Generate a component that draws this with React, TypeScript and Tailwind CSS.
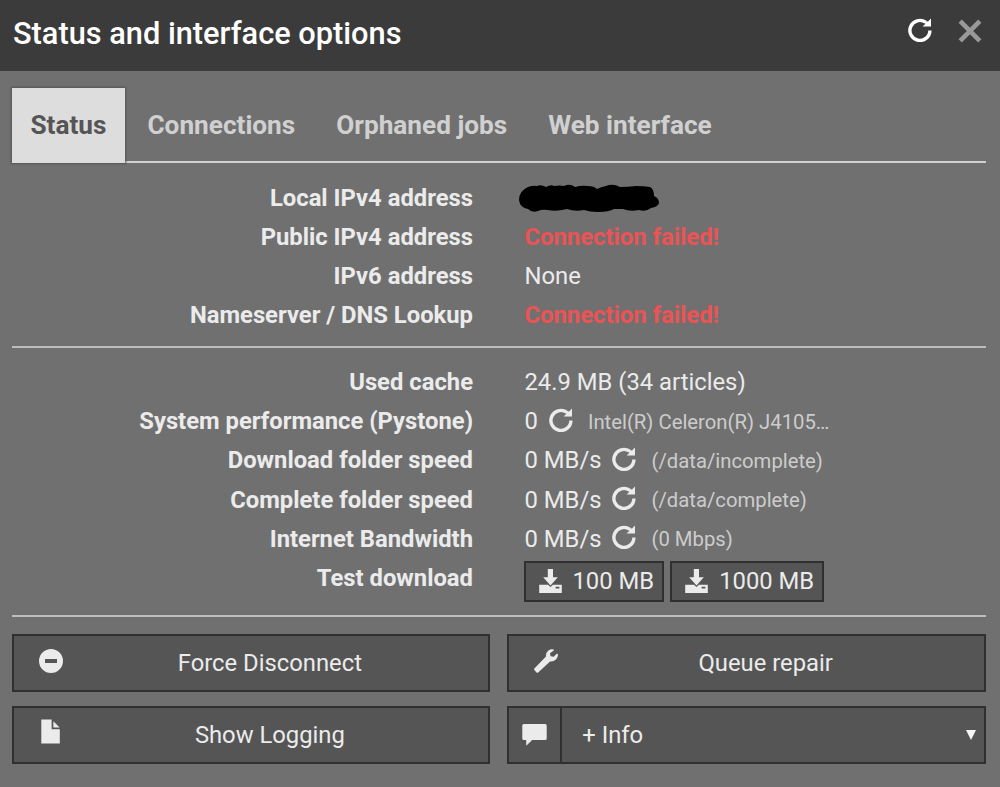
import { useState } from "react";
import type { ReactNode } from "react";

interface RowProps {
  label: string;
  children: ReactNode;
}

const tabs = ["Status", "Connections", "Orphaned jobs", "Web interface"];

const RefreshIcon = () => (
  <svg viewBox="0 0 24 24" className="h-6 w-6 shrink-0" fill="none">
    <path d="M21.9 12.4A10 10 0 1 1 17.6 4.2" stroke="currentColor" strokeWidth="3.4" />
    <path d="M23 0.6V8.6H14.6L17.2 6L16.4 2.8L20 3.6Z" fill="currentColor" />
  </svg>
);

const CloseIcon = () => (
  <svg viewBox="0 0 24 24" className="h-6 w-6">
    <path d="M2.2 2.2L21.8 21.8M21.8 2.2L2.2 21.8" stroke="currentColor" strokeWidth="4.6" />
  </svg>
);

const SaveIcon = () => (
  <svg viewBox="0 0 23 24" className="h-6 w-[23px] shrink-0" fill="currentColor">
    <path d="M8.8 0H14V8.3H18.8L11.5 16.6L4.2 8.3H8.8Z" />
    <path
      fillRule="evenodd"
      d="M0.2 15.8H9L11.5 18L14 15.8H22.8V24H0.2ZM16.6 17.8V19.6H20.4V17.8Z"
    />
  </svg>
);

const MinusIcon = () => (
  <svg viewBox="0 0 24 24" className="h-6 w-6" fill="currentColor">
    <path fillRule="evenodd" d="M12 0A12 12 0 1 1 12 24A12 12 0 1 1 12 0ZM6 10V14H18V10Z" />
  </svg>
);

const FileIcon = () => (
  <svg viewBox="0 0 19 25" className="-mt-1 h-[25px] w-[19px]" fill="currentColor">
    <path d="M0.3 0.4H10.6V10.2H18.8V24.6H0.3Z" />
    <path d="M12.4 2.2L18.6 8.4H12.4Z" />
  </svg>
);

const WrenchIcon = () => (
  <svg viewBox="0 0 24 24" className="h-6 w-6" fill="currentColor">
    <path d="M19.8 0.6Q17 -0.4 14.4 1.4Q11.6 3.6 12 7.6L0.4 19.6Q-0.2 20.4 0.5 21.2L2.6 23.5Q3.4 24.2 4.2 23.4L16 12.4Q19.4 12.8 22 10.4Q24.4 8 23.8 5L22.8 4.8L19.6 7.8L16.6 7.2L16 4.2L19.8 1.6Z" />
  </svg>
);

const CommentIcon = () => (
  <svg viewBox="0 0 25 22" className="h-[22px] w-[25px]" fill="currentColor">
    <path d="M1.8 0H23.2Q24.7 0 24.7 1.5V14.4Q24.7 16 23.2 16H10.2L4.2 21.8V16H1.8Q0.3 16 0.3 14.4V1.5Q0.3 0 1.8 0Z" />
  </svg>
);

// Scribble that hides the local address
const Redacted = () => (
  <svg viewBox="0 0 142 30" className="-ml-[7px] mt-0.5 h-[30px] w-[142px]">
    <path d="M10 3Q15 1 19 2Q23 0 28 3Q33 0 36 2Q42 1 46 2Q52 -1 57 3Q63 1 70 2Q76 2 79 5Q83 3 88 2Q95 -1 102 3Q110 3 118 2Q126 2 132 3Q136 5 136 12Q141 14 141 19Q140 23 133 24Q128 28 121 26Q112 28 105 25L96 25Q91 28 80 28Q72 28 66 26Q57 28 49 25Q38 28 30 26Q24 25 20 27Q14 29 10 25Q2 24 1 16Q1 7 10 3Z" />
  </svg>
);

const Row = ({ label, children }: RowProps) => (
  <div className="flex h-[39.2px] items-center">
    <div className="w-[461.5px] shrink-0 text-right font-bold">{label}</div>
    <div className="ml-[51.5px] flex items-center whitespace-nowrap">{children}</div>
  </div>
);

const Speed = ({ value, note }: { value: string; note: string }) => (
  <>
    <span>{value}</span>
    <button className="-mt-[3px] ml-[11px]">
      <RefreshIcon />
    </button>
    <span className="ml-[15px] pt-px text-[20.3px] text-[#cccccc]">{note}</span>
  </>
);

const Failed = () => <span className="font-bold text-[#ec5355]">Connection failed!</span>;

const TestButton = ({ label }: { label: string }) => (
  <button className="flex h-[41px] items-center gap-[11px] border-2 border-[#303030] bg-[#555555] pr-[8px] pl-[13px]">
    <SaveIcon />
    {label}
  </button>
);

const ActionButton = ({ icon, label }: { icon: ReactNode; label: string }) => (
  <button className="flex h-[58px] items-center border-2 border-[#303030] bg-[#555555]">
    <span className="-mt-1 flex w-[74px] shrink-0 justify-center">{icon}</span>
    <span className="flex-1 pr-9 text-center">{label}</span>
  </button>
);

export default function App() {
  const [active, setActive] = useState("Status");

  return (
    <div className="h-[787px] w-[1000px] overflow-hidden bg-[#707070] font-[Roboto,sans-serif] text-[23.8px] leading-8 text-[#ebebeb]">
      <header className="flex h-[71px] items-center justify-between bg-[#3b3b3b] pr-[18px] pb-[5px] pl-[13px]">
        <h1 className="pt-px text-[30.75px] font-medium text-white">Status and interface options</h1>
        <div className="flex items-center gap-[26px] pb-1">
          <button className="-mt-0.5 text-white">
            <RefreshIcon />
          </button>
          <button className="text-[#999999]">
            <CloseIcon />
          </button>
        </div>
      </header>

      <main className="pr-[14px] pl-[11.5px]">
        <nav className="mt-[17px] flex h-[75px] border-b-2 border-[#d0d0d0] text-[26.2px] font-bold">
          {tabs.map((tab) => (
            <button
              key={tab}
              onClick={() => setActive(tab)}
              className={
                tab === active
                  ? "-mb-0.5 mr-[3px] bg-[#dddddd] px-[19px] pb-0.5 text-[#555555] shadow-[0_0_2px_1px_#555555]"
                  : "mr-[3px] px-[19px] text-[#d0d0d0]"
              }
            >
              {tab}
            </button>
          ))}
        </nav>

        <section className="h-[185px] border-b-2 border-[#bdbdbd] pt-[15px]">
          <Row label="Local IPv4 address">
            <Redacted />
          </Row>
          <Row label="Public IPv4 address">
            <Failed />
          </Row>
          <Row label="IPv6 address">None</Row>
          <Row label="Nameserver / DNS Lookup">
            <Failed />
          </Row>
        </section>

        <section className="h-[269px] border-b-2 border-[#bdbdbd] pt-[14.5px]">
          <Row label="Used cache">24.9 MB (34 articles)</Row>
          <Row label="System performance (Pystone)">
            <Speed value="0" note="Intel(R) Celeron(R) J4105…" />
          </Row>
          <Row label="Download folder speed">
            <Speed value="0 MB/s" note="(/data/incomplete)" />
          </Row>
          <Row label="Complete folder speed">
            <Speed value="0 MB/s" note="(/data/complete)" />
          </Row>
          <Row label="Internet Bandwidth">
            <Speed value="0 MB/s" note="(0 Mbps)" />
          </Row>
          <Row label="Test download">
            <div className="mt-1.5 -ml-px flex gap-1.5">
              <TestButton label="100 MB" />
              <TestButton label="1000 MB" />
            </div>
          </Row>
        </section>

        <section className="mt-[17px] grid grid-cols-2 gap-x-[17px] gap-y-[14px]">
          <ActionButton icon={<MinusIcon />} label="Force Disconnect" />
          <ActionButton icon={<WrenchIcon />} label="Queue repair" />
          <ActionButton icon={<FileIcon />} label="Show Logging" />
          <div className="flex h-[58px] border-2 border-[#303030] bg-[#555555]">
            <span className="flex w-[53px] items-center justify-center border-r-2 border-[#303030]">
              <CommentIcon />
            </span>
            <button className="flex flex-1 items-center justify-between pr-[8px] pl-5">
              + Info
              <svg viewBox="0 0 10 10" className="h-2.5 w-2.5" fill="#f5f5f5">
                <path d="M0 0H10L5 10Z" />
              </svg>
            </button>
          </div>
        </section>
      </main>
    </div>
  );
}
